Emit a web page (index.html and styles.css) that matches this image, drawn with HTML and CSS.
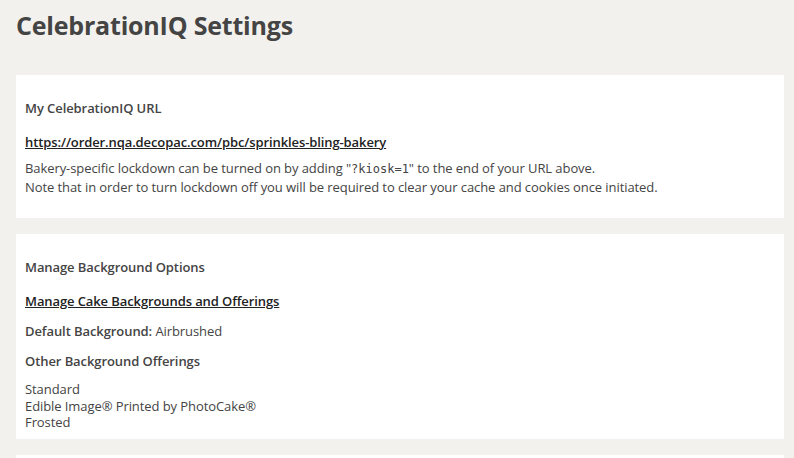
FILE: index.html
```html
<!DOCTYPE html>
<html>
<head>
<meta charset="utf-8">
<link rel="stylesheet" href="styles.css">
</head>
<body>
<div class="page">
  <h1 class="title">CelebrationIQ Settings</h1>
  <section class="card card-url">
    <h2 class="card-heading">My CelebrationIQ URL</h2>
    <p class="link-row"><a class="link" href="#">https://order.nqa.decopac.com/pbc/sprinkles-bling-bakery</a></p>
    <p class="note">Bakery-specific lockdown can be turned on by adding "<code class="code">?kiosk=1</code>" to the end of your URL above.<br>Note that in order to turn lockdown off you will be required to clear your cache and cookies once initiated.</p>
  </section>
  <section class="card card-bg">
    <h2 class="card-heading">Manage Background Options</h2>
    <p class="link-row"><a class="link" href="#">Manage Cake Backgrounds and Offerings</a></p>
    <p class="field"><strong class="label">Default Background:</strong> Airbrushed</p>
    <h3 class="sub-heading">Other Background Offerings</h3>
    <ul class="offer-list">
      <li>Standard</li>
      <li>Edible Image® Printed by PhotoCake®</li>
      <li>Frosted</li>
    </ul>
  </section>
  <section class="card card-empty"></section>
</div>
</body>
</html>
```
FILE: styles.css
```css
html, body {
  margin: 0;
  padding: 0;
  background: #f3f1ed;
}
body {
  font-family: "Open Sans", "Liberation Sans", sans-serif;
  color: #444;
  font-size: 13px;
  letter-spacing: -0.08px;
}
.page {
  padding: 0 10px 0 16px;
  display: flex;
  flex-direction: column;
}
.title {
  margin: 0;
  padding-top: 5px;
  font-size: 25px;
  font-weight: 700;
  letter-spacing: -0.2px;
  line-height: 40px;
  color: #444;
  height: 70px;
}
.card {
  background: #fff;
  padding: 22px 9px 0 9px;
  margin-bottom: 16px;
}
.card-url { height: 121px; }
.card-bg { height: 183px; }
.card-empty { height: 40px; }
.card-heading {
  margin: 0;
  font-size: 13px;
  font-weight: 600;
  line-height: 22px;
}
.link-row {
  margin: 12px 0 0 0;
  line-height: 22px;
}
.link {
  color: #222;
  font-weight: 600;
  text-decoration: underline;
  letter-spacing: -0.1px;
}
.note {
  margin: 6px 0 0 0;
  line-height: 18px;
  color: #444;
}
.code {
  font-family: "DejaVu Sans Mono", "Liberation Mono", monospace;
  font-size: 12px;
  letter-spacing: 0;
}
.field {
  margin: 8px 0 0 0;
  line-height: 22px;
}
.label { font-weight: 600; }
.sub-heading {
  margin: 8px 0 0 0;
  font-size: 13px;
  font-weight: 600;
  line-height: 22px;
}
.offer-list {
  list-style: none;
  margin: 9px 0 0 0;
  padding: 0;
  line-height: 16.5px;
}
```
